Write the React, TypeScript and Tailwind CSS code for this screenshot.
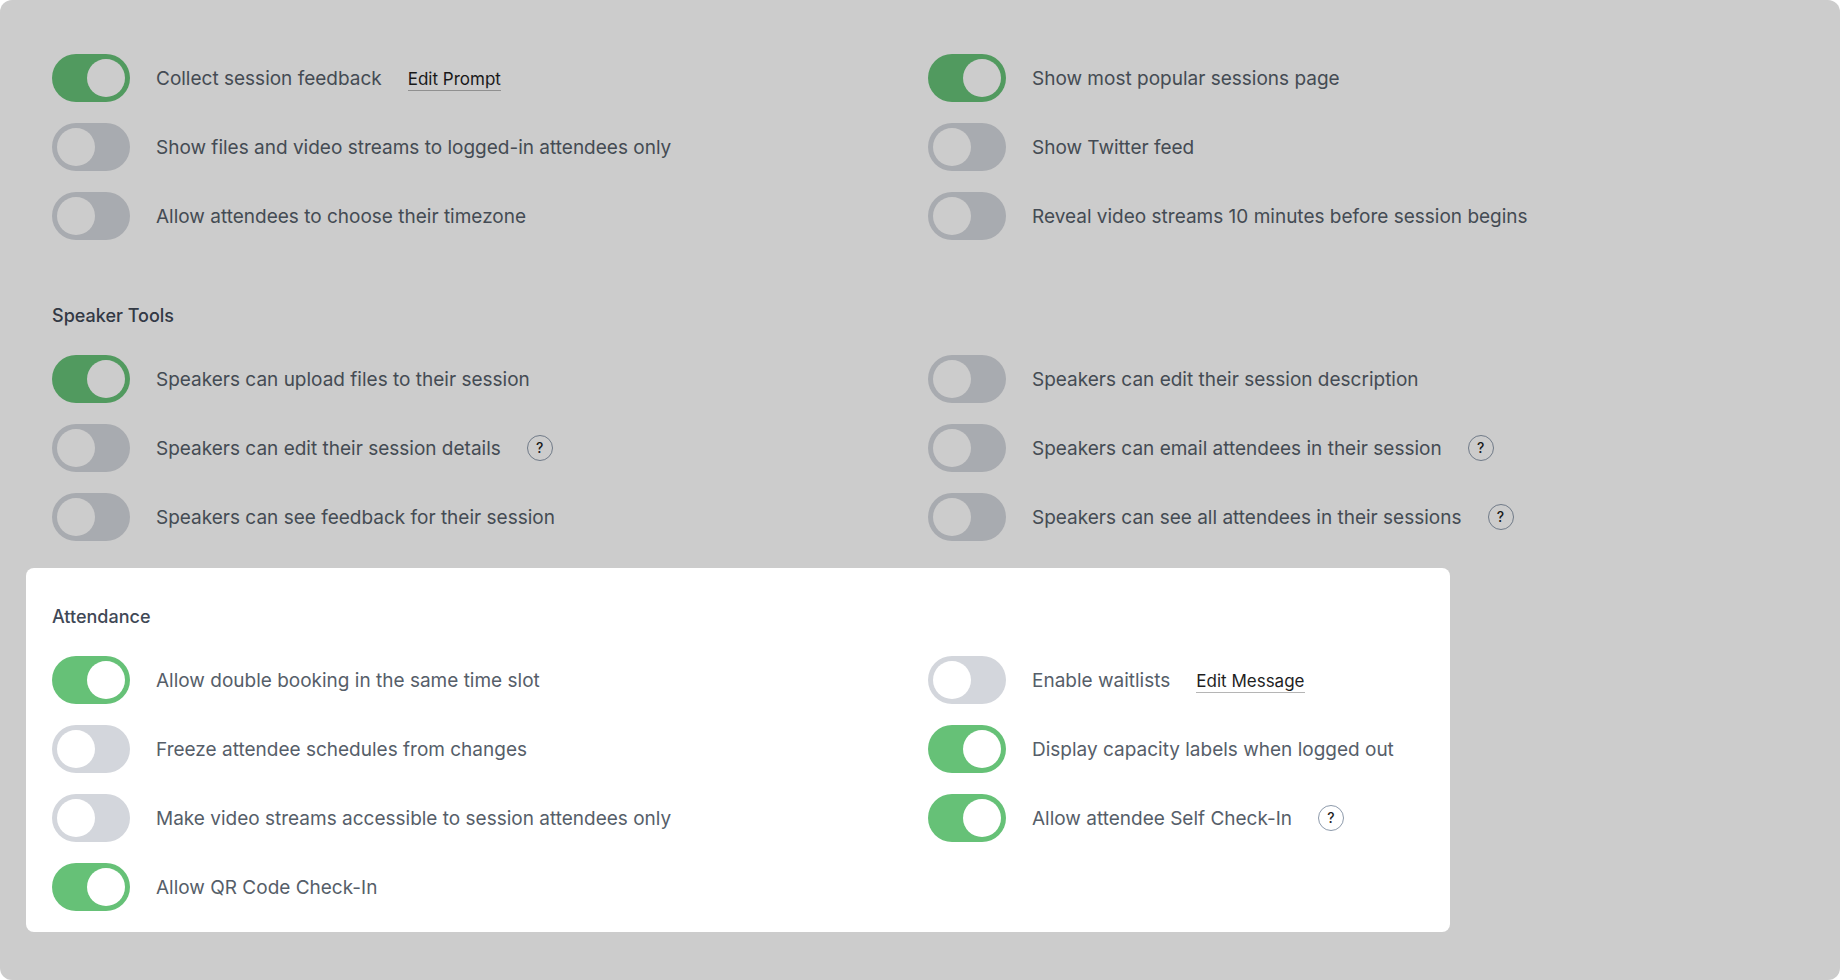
import { useId, useState } from 'react';

type Setting = {
  label: string;
  enabled?: boolean;
  action?: string;
  help?: boolean;
};

const attendeeTools: Setting[] = [
  { label: 'Collect session feedback', enabled: true, action: 'Edit Prompt' },
  { label: 'Show most popular sessions page', enabled: true },
  { label: 'Show files and video streams to logged-in attendees only' },
  { label: 'Show Twitter feed' },
  { label: 'Allow attendees to choose their timezone' },
  { label: 'Reveal video streams 10 minutes before session begins' },
];

const speakerTools: Setting[] = [
  { label: 'Speakers can upload files to their session', enabled: true },
  { label: 'Speakers can edit their session description' },
  { label: 'Speakers can edit their session details', help: true },
  { label: 'Speakers can email attendees in their session', help: true },
  { label: 'Speakers can see feedback for their session' },
  { label: 'Speakers can see all attendees in their sessions', help: true },
];

const attendance: Setting[] = [
  { label: 'Allow double booking in the same time slot', enabled: true },
  { label: 'Enable waitlists', action: 'Edit Message' },
  { label: 'Freeze attendee schedules from changes' },
  { label: 'Display capacity labels when logged out', enabled: true },
  { label: 'Make video streams accessible to session attendees only' },
  { label: 'Allow attendee Self Check-In', enabled: true, help: true },
  { label: 'Allow QR Code Check-In', enabled: true },
];

function SettingRow({ label, enabled = false, action, help }: Setting) {
  const id = useId();
  const [checked, setChecked] = useState(enabled);

  return (
    <div className="flex items-center gap-[26px]">
      <input
        id={id}
        type="checkbox"
        role="switch"
        checked={checked}
        onChange={(e) => setChecked(e.target.checked)}
        className="flex h-12 w-[78px] shrink-0 cursor-pointer appearance-none items-center rounded-full bg-[#d3d6dc] px-[5px] transition-colors before:size-[38px] before:rounded-full before:bg-white checked:justify-end checked:bg-[#66c177]"
      />
      <label htmlFor={id} className="cursor-pointer pt-0.5 text-[19px] leading-6 text-[#565e69]">
        {label}
      </label>
      {action && (
        <a href="#" className="border-b border-[#b5b5b5] pt-0.5 text-[17px] leading-[22px] text-[#1f1f1f]">
          {action}
        </a>
      )}
      {help && (
        <button
          type="button"
          aria-label="Help"
          className="flex size-[26px] shrink-0 items-center justify-center rounded-full border border-[#8d9aab] text-[14px] leading-none font-medium text-[#1f1f1f]"
        >
          ?
        </button>
      )}
    </div>
  );
}

function SettingGrid({ settings }: { settings: Setting[] }) {
  return (
    <div className="grid grid-cols-2 gap-y-[21px]">
      {settings.map((setting) => (
        <SettingRow key={setting.label} {...setting} />
      ))}
    </div>
  );
}

function SectionTitle({ children }: { children: string }) {
  return <h2 className="mb-[27px] text-[18px] leading-6 font-medium text-[#3f4856]">{children}</h2>;
}

export default function App() {
  return (
    <main className="min-h-screen overflow-hidden rounded-xl bg-white pt-[54px] pr-9 pb-16 pl-[52px] font-['Inter',sans-serif]">
      <div className="flex flex-col gap-16">
        <section aria-label="Attendee Tools">
          <SettingGrid settings={attendeeTools} />
        </section>

        <section>
          <SectionTitle>Speaker Tools</SectionTitle>
          <SettingGrid settings={speakerTools} />
        </section>

        <section className="relative">
          <SectionTitle>Attendance</SectionTitle>
          <SettingGrid settings={attendance} />

          {/* Spotlight: dims everything outside of this section */}
          <div className="pointer-events-none absolute -top-[37px] right-[354px] -bottom-[21px] -left-[26px] rounded-lg shadow-[0_0_0_2000px_rgba(0,0,0,0.2)]" />
        </section>
      </div>
    </main>
  );
}
